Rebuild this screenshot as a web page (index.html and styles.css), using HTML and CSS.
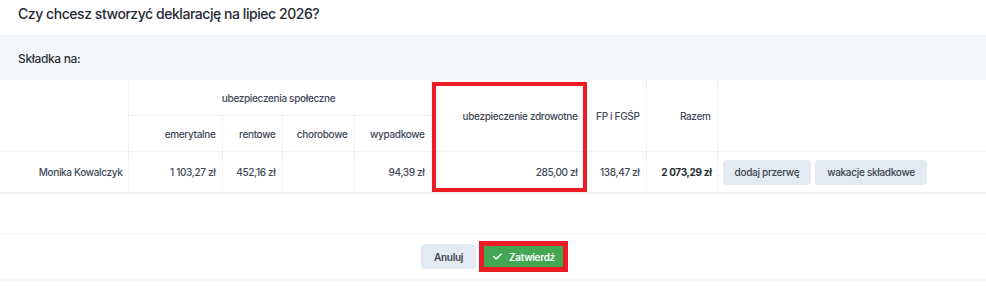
FILE: index.html
```html
<!DOCTYPE html>
<html lang="pl">
<head>
    <meta charset="UTF-8">
    <meta name="viewport" content="width=device-width, initial-scale=1.0">
    <title>Deklaracja</title>
    <link rel="stylesheet" href="styles.css">
</head>
<body>
    <div class="modal">
        <div class="modal-header">
            <h5 class="modal-title">Czy chcesz stworzyć deklarację na lipiec 2026?</h5>
        </div>
        <div class="section-bar">Składka na:</div>
        <div class="table-wrap">
            <table class="contrib">
                <colgroup>
                    <col class="c-name">
                    <col class="c-emer">
                    <col class="c-rent">
                    <col class="c-chor">
                    <col class="c-wyp">
                    <col class="c-zdr">
                    <col class="c-fp">
                    <col class="c-sum">
                    <col>
                </colgroup>
                <thead>
                    <tr class="head-top">
                        <th rowspan="2"></th>
                        <th colspan="4" class="group">ubezpieczenia społeczne</th>
                        <th rowspan="2">ubezpieczenie zdrowotne</th>
                        <th rowspan="2">FP i FGŚP</th>
                        <th rowspan="2">Razem</th>
                        <th rowspan="2"></th>
                    </tr>
                    <tr class="head-sub">
                        <th>emerytalne</th>
                        <th>rentowe</th>
                        <th>chorobowe</th>
                        <th>wypadkowe</th>
                    </tr>
                </thead>
                <tbody>
                    <tr>
                        <td>Monika Kowalczyk</td>
                        <td>1 103,27 zł</td>
                        <td>452,16 zł</td>
                        <td></td>
                        <td>94,39 zł</td>
                        <td>285,00 zł</td>
                        <td>138,47 zł</td>
                        <td class="total">2 073,29 zł</td>
                        <td class="actions">
                            <div class="action-group">
                                <button class="btn btn-light">dodaj przerwę</button>
                                <button class="btn btn-light">wakacje składkowe</button>
                            </div>
                        </td>
                    </tr>
                </tbody>
            </table>
            <div class="highlight highlight-col"></div>
        </div>
        <div class="modal-gap"></div>
        <div class="modal-footer">
            <button class="btn btn-light btn-footer">Anuluj</button>
            <button class="btn btn-success btn-footer highlighted">
                <svg class="check" width="9" height="7" viewBox="0 0 9 7" aria-hidden="true">
                    <path d="M0.8 3.6 L3.2 5.9 L8.2 0.9" fill="none" stroke="#fff" stroke-width="1.4" stroke-linecap="round" stroke-linejoin="round"/>
                </svg>
                Zatwierdź
            </button>
        </div>
    </div>
</body>
</html>
```

FILE: styles.css
```css
body {
    margin: 0;
    background-color: #fff;
    color: #2b3038;
    font-family: Inter, "Noto Sans", sans-serif;
}
.modal {
    width: 986px;
}
.modal-header {
    padding: 4px 18px 11px;
    border-bottom: 1px solid #eceff3;
}
.modal-title {
    margin: 0;
    font-size: 14px;
    line-height: 20px;
    font-weight: 500;
    letter-spacing: -0.45px;
    color: #262a31;
}
.section-bar {
    height: 44px;
    display: flex;
    align-items: center;
    padding: 0 18px;
    background-color: #f4f7fa;
    font-size: 12px;
    font-weight: 500;
    letter-spacing: -0.35px;
    color: #2f343c;
}
.table-wrap {
    position: relative;
}
.contrib {
    width: 100%;
    table-layout: fixed;
    border-collapse: collapse;
    font-size: 10px;
    letter-spacing: -0.33px;
    color: #414956;
}
.c-name { width: 128px; }
.c-emer { width: 94px; }
.c-rent { width: 60px; }
.c-chor { width: 72px; }
.c-wyp { width: 77px; }
.c-zdr { width: 153px; }
.c-fp { width: 62px; }
.c-sum { width: 71px; }
.contrib th,
.contrib td {
    padding: 0 6px 0 4px;
    text-align: right;
    font-weight: 500;
    border-left: 1px dotted #dfe4ea;
    white-space: nowrap;
}
.contrib th:first-child,
.contrib td:first-child {
    border-left: none;
}
.contrib td:first-child {
    padding-right: 5px;
}
.head-top th {
    height: 35px;
}
.head-top th.group {
    text-align: center;
    border-bottom: 1px solid #eef1f5;
}
.head-sub th {
    height: 35px;
}
.head-sub th:first-child {
    border-left: 1px dotted #dfe4ea;
}
.contrib thead {
    border-bottom: 1px solid #eef1f5;
}
.contrib tbody td {
    height: 40px;
    border-bottom: 2px solid #eef1f5;
}
.contrib td.total {
    font-weight: 700;
    color: #2b3038;
    padding-right: 5px;
}
.contrib td.actions {
    text-align: left;
    padding-left: 5px;
}
.action-group {
    display: flex;
    gap: 4px;
}
.btn {
    font-family: Inter, "Noto Sans", sans-serif;
    font-size: 10px;
    font-weight: 500;
    letter-spacing: -0.3px;
    border: none;
    border-radius: 4px;
    cursor: pointer;
    height: 25px;
    padding: 0 12px;
}
.btn-light {
    background-color: #e4eaf1;
    color: #3b4452;
}
.highlight {
    position: absolute;
    border: 4px solid #ec1c24;
    box-sizing: border-box;
    pointer-events: none;
}
.highlight-col {
    left: 432px;
    top: 2px;
    width: 155px;
    height: 110px;
}
.modal-gap {
    height: 39px;
}
.modal-footer {
    height: 45px;
    border-top: 1px solid #eceff3;
    border-bottom: 2px solid #eef0f4;
    display: flex;
    align-items: center;
    justify-content: center;
    gap: 6px;
}
.btn-footer {
    font-weight: 600;
    padding: 0 13px;
}
.btn-success {
    background-color: #43a653;
    color: #fff;
    display: inline-flex;
    align-items: center;
    gap: 7px;
    padding: 0 10px 0 11px;
}
.highlighted {
    border-radius: 0;
    outline: 5px solid #ec1c24;
    outline-offset: -2px;
}
.check {
    display: block;
}
```
